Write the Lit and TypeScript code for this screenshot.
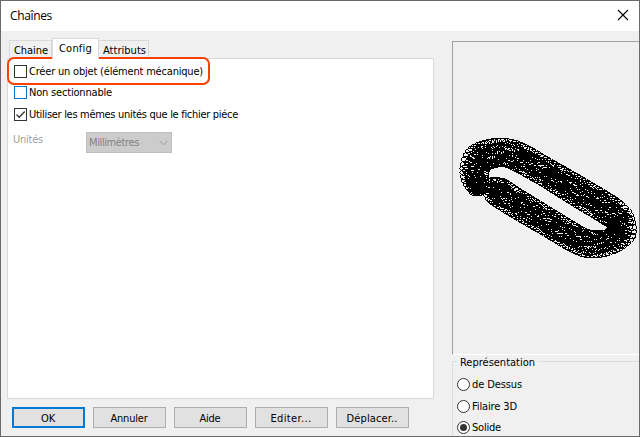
import { LitElement, html, svg, css } from "lit";
import { customElement, property } from "lit/decorators.js";

/** Text label whose tracking is adjusted so that it takes a given width. */
@customElement("fit-label")
class FitLabel extends LitElement {
  @property({ type: Number }) w = 0;
  @property() text = "";

  static styles = css`
    :host { display: inline-block; white-space: pre; line-height: 14px; flex: none; }
  `;

  render() {
    return html`<span>${this.text}</span>`;
  }

  firstUpdated() {
    const span = this.renderRoot.querySelector("span")!;
    const natural = span.getBoundingClientRect().width;
    span.style.letterSpacing = `${(this.w - natural) / this.text.length}px`;
  }
}

type Pt = [number, number];

// Outer and inner edge of the chain, pairwise along its run.
const EDGES: [Pt, Pt][] = [
  [[471, 193], [486, 190]],
  [[463, 180], [487, 183]],
  [[462, 163], [487, 175]],
  [[468, 149], [489, 170]],
  [[481, 141], [495, 168]],
  [[500, 138], [504, 167]],
  [[521, 142], [514, 171]],
  [[553, 160], [541, 186]],
  [[588, 180], [573, 206]],
  [[621, 201], [606, 226]],
  [[633, 217], [609, 228]],
  [[634, 237], [608, 229]],
  [[620, 251], [605, 230]],
  [[598, 258], [594, 230]],
  [[577, 255], [583, 227]],
  [[542, 235], [555, 210]],
  [[506, 214], [522, 190]],
  [[489, 202], [503, 178]],
  [[486, 192], [490, 178]],
];

const spline = (p: number, a: number, b: number, c: number, t: number) =>
  0.5 * (2 * a + (b - p) * t + (2 * p - 5 * a + 4 * b - c) * t * t + (3 * a - p - 3 * b + c) * t * t * t);

function links() {
  const out = [];
  const rows = 7;
  const last = EDGES.length - 1;
  let n = 0;
  for (let i = 0; i < last; i++) {
    const e = [EDGES[Math.max(0, i - 1)], EDGES[i], EDGES[i + 1], EDGES[Math.min(last, i + 2)]];
    const at = (side: number, t: number): Pt => [
      spline(e[0][side][0], e[1][side][0], e[2][side][0], e[3][side][0], t),
      spline(e[0][side][1], e[1][side][1], e[2][side][1], e[3][side][1], t),
    ];
    const [a, b] = e[1];
    const [c, d] = e[2];
    const len = Math.hypot((c[0] + d[0] - a[0] - b[0]) / 2, (c[1] + d[1] - a[1] - b[1]) / 2);
    const steps = Math.max(3, Math.round(len / 3));
    for (let s = 0; s < steps; s++, n++) {
      const o = at(0, s / steps);
      const q = at(1, s / steps);
      const width = Math.hypot(q[0] - o[0], q[1] - o[1]);
      for (let r = 0; r < rows; r++) {
        const f = 3.5 / width + (r / (rows - 1)) * (1 - 7 / width);
        const inside = r > 0 && r < rows - 1;
        const x = o[0] + (q[0] - o[0]) * f + (inside ? Math.sin(n * 7.3 + r * 3.1) * 1.5 : 0);
        const y = o[1] + (q[1] - o[1]) * f + (inside ? Math.cos(n * 5.7 + r * 4.3) * 1.3 : 0);
        out.push(svg`<ellipse cx=${x.toFixed(1)} cy=${y.toFixed(1)} rx=${r % 2 ? 4 : 5} ry="3"/>`);
      }
    }
  }
  return out;
}

@customElement("app-root")
class AppRoot extends LitElement {
  static styles = css`
    * { box-sizing: border-box; }
    :host {
      display: block; width: 640px; height: 437px; overflow: hidden;
      font: 11px "DejaVu Sans Condensed", "DejaVu Sans", sans-serif;
      font-stretch: condensed; color: #000;
    }
    .window {
      width: 640px; height: 437px; border: 1px solid #6b696b; background: #f0f0f0;
      display: flex; flex-direction: column; overflow: hidden;
    }
    .title {
      height: 30px; flex: none; background: #fff; display: flex; align-items: center;
      justify-content: space-between; padding: 0 9px 0 9px;
      font: 12px "Open Sans", "Noto Sans", sans-serif;
    }
    .close { width: 12px; height: 12px; margin: 0 1px 2px 0; }
    .body { flex: 1; min-height: 0; display: grid; grid-template-columns: 451px 1fr; }
    .left { padding: 7px 0 0 6px; }
    .tabs { display: flex; align-items: flex-end; height: 20px; padding-left: 2px; }
    .tab {
      height: 18px; border: 1px solid #d9d9d9; border-bottom: 0; border-left: 0;
      padding: 3px 0 0 4px; width: 50px;
    }
    .tab.first { width: 43px; border-left: 1px solid #d9d9d9; }
    .tab.active { width: 47px; height: 21px; margin-bottom: -1px; background: #fff; padding: 3px 0 0 6px; border-left: 1px solid #d9d9d9; z-index: 1; }
    .panel {
      position: relative; width: 427px; height: 341px; background: #fff;
      border: 1px solid #d9d9d9; padding: 5px 0 0 6px;
    }
    .mark {
      position: absolute; left: -1px; top: -2px; width: 203px; height: 28px;
      border: 2px solid #fb4005; border-radius: 7px;
    }
    .check { display: flex; align-items: center; gap: 2px; height: 14px; margin-bottom: 7px; }
    .check fit-label, .radio fit-label { margin-top: 2px; }
    .check.last { margin-top: 8px; }
    .box { width: 13px; height: 13px; border: 1px solid #333; background: #fff; flex: none; }
    .box.hot { border-color: #0078d7; }
    .box svg { display: block; width: 11px; height: 11px; }
    .units { display: flex; color: #a0a0a0; margin-top: 11px; }
    .units > fit-label { margin: 1px 0 0 -1px; }
    .combo {
      margin-left: 43px; width: 86px; height: 21px; background: #ccc; border: 1px solid #bfbfbf;
      display: flex; align-items: center; justify-content: space-between; padding: 1px 3px 0 2px; color: #838383;
    }
    .combo svg { width: 9px; height: 6px; }
    .buttons { display: flex; gap: 8px; padding: 8px 0 0 5px; }
    .button {
      width: 73px; height: 21px; border: 1px solid #adadad; background: #e1e1e1;
      display: flex; align-items: center; justify-content: center; padding: 2px 1px 0 0;
    }
    .button.default { border: 2px solid #0078d7; }
    .right { padding-top: 10px; min-width: 0; }
    .preview {
      height: 314px; border: 1px solid #a0a0a0; border-right: 0; border-bottom-color: #fff; overflow: hidden;
    }
    .preview svg { display: block; width: 186px; height: 312px; }
    .chain { fill: none; stroke: #000; stroke-width: 1; shape-rendering: crispEdges; }
    .group { margin-top: 6px; height: 90px; border: 1px solid #dcdcdc; border-right: 0; padding-left: 4px; }
    .legend { width: 82px; height: 14px; margin-top: -6px; padding-left: 3px; background: #f0f0f0; display: flex; }
    .radio { display: flex; align-items: center; gap: 2px; height: 14px; margin-top: 8px; }
    .legend + .radio { margin-top: 7px; }
    .radio:last-child { margin-top: 7px; }
    .dot {
      width: 13px; height: 13px; border: 1px solid #333; border-radius: 50%; background: #fff;
      display: grid; place-items: center; flex: none;
    }
    .dot i { width: 7px; height: 7px; border-radius: 50%; background: #333; }
  `;

  render() {
    const label = (text: string, w: number) => html`<fit-label .text=${text} .w=${w}></fit-label>`;
    const buttons: [string, number][] = [["OK", 14], ["Annuler", 37], ["Aide", 21], ["Editer...", 41], ["Déplacer..", 51]];
    const radios: [string, number][] = [["de Dessus", 50], ["Filaire 3D", 45], ["Solide", 29]];
    return html`
      <div class="window">
        <div class="title">
          ${label("Chaînes", 42)}
          <svg class="close" viewBox="0 0 12 12"><path d="M1 1L11 11M11 1L1 11" stroke="#000" stroke-width="1.1"/></svg>
        </div>
        <div class="body">
          <div class="left">
            <div class="tabs">
              <div class="tab first">${label("Chaine", 34)}</div>
              <div class="tab active">${label("Config", 33)}</div>
              <div class="tab">${label("Attributs", 43)}</div>
            </div>
            <div class="panel">
              <div class="check"><span class="box"></span>${label("Créer un objet (élément mécanique)", 174)}</div>
              <div class="check"><span class="box hot"></span>${label("Non sectionnable", 83)}</div>
              <div class="check last">
                <span class="box"><svg viewBox="0 0 11 11"><path d="M1.5 5.5L4.2 8.2L9.7 2.5" fill="none" stroke="#333" stroke-width="1.3"/></svg></span>
                ${label("Utiliser les mêmes unités que le fichier piéce", 209)}
              </div>
              <div class="units">
                ${label("Unités", 30)}
                <div class="combo">${label("Millimètres", 50)}
                  <svg viewBox="0 0 9 6"><path d="M.5 .8L4.5 4.8L8.5 .8" fill="none" stroke="#9a9a9a"/></svg>
                </div>
              </div>
              <div class="mark"></div>
            </div>
            <div class="buttons">
              ${buttons.map(([t, w], i) => html`<div class="button ${i === 0 ? "default" : ""}">${label(t, w)}</div>`)}
            </div>
          </div>
          <div class="right">
            <div class="preview">
              <svg viewBox="453 42 186 312"><g class="chain">${links()}</g></svg>
            </div>
            <div class="group">
              <div class="legend">${label("Représentation", 75)}</div>
              ${radios.map(([t, w], i) => html`<div class="radio"><span class="dot">${i === 2 ? html`<i></i>` : ""}</span>${label(t, w)}</div>`)}
            </div>
          </div>
        </div>
      </div>
    `;
  }
}
